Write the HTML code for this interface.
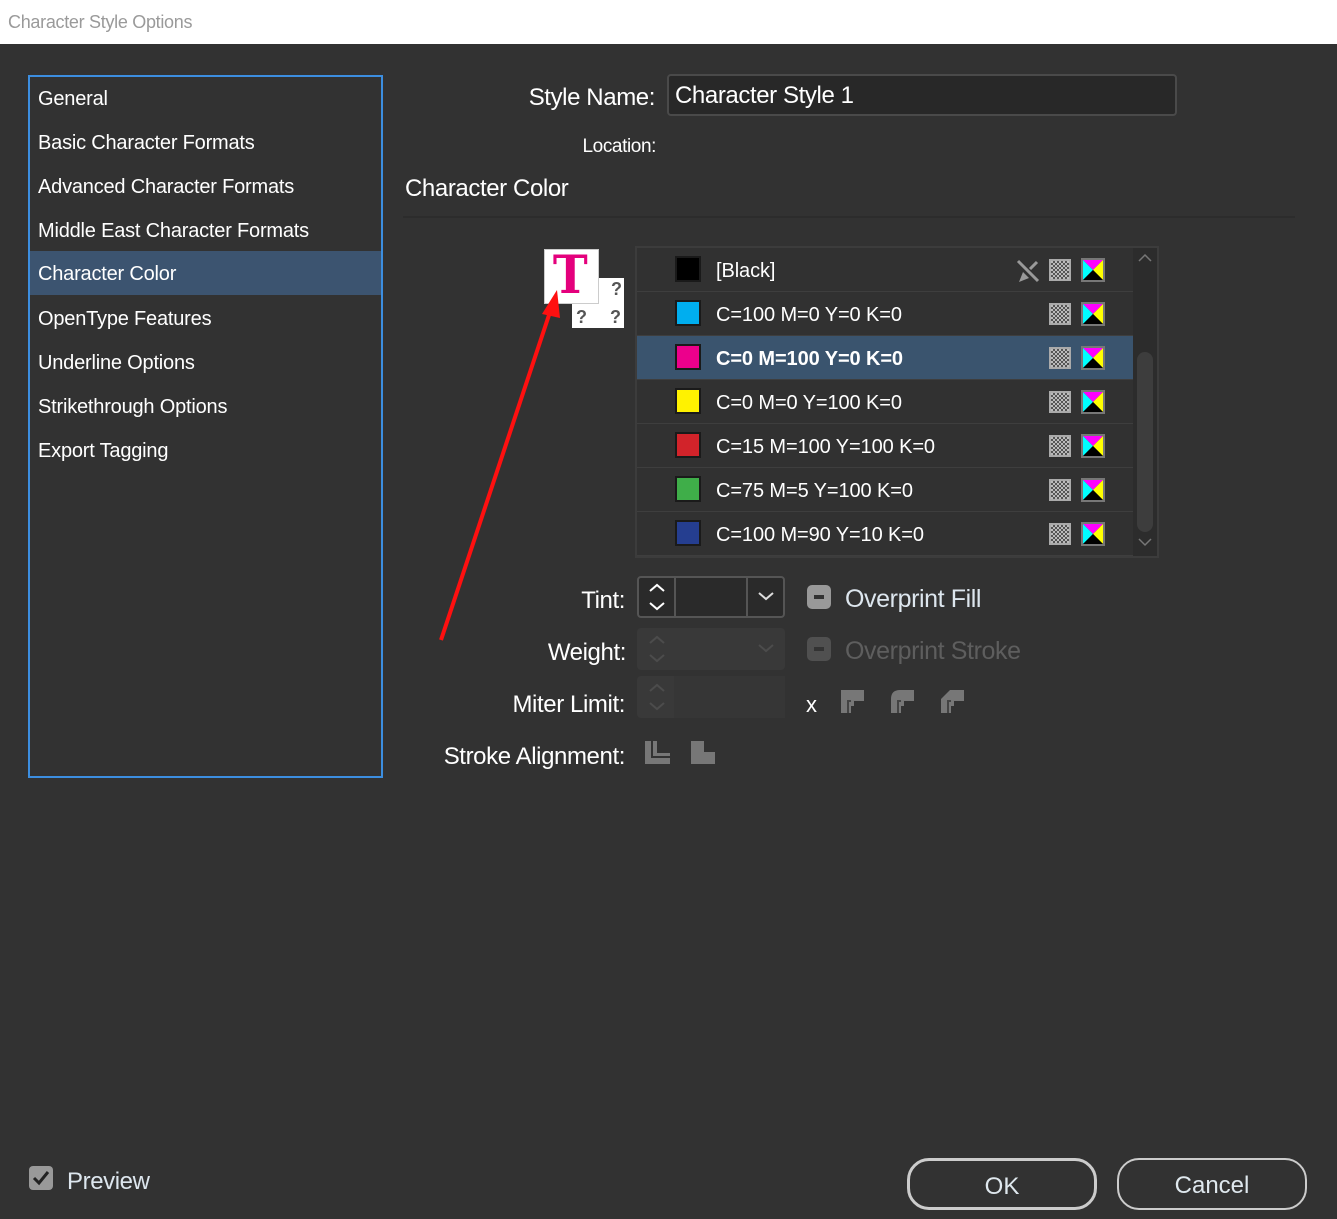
<!DOCTYPE html>
<html><head><meta charset="utf-8">
<style>
*{margin:0;padding:0;box-sizing:border-box}
body{width:1337px;height:1219px;background:#323232;font-family:"Liberation Sans",sans-serif;color:#fff;position:relative;overflow:hidden}
.a{position:absolute;white-space:nowrap}
.title{left:0;top:0;width:1337px;height:44px;background:#fff}
.nav{left:28px;top:75px;width:355px;height:703px;border:2px solid #3c8ee0}
.nav div{position:absolute;left:0;width:351px;height:44px;line-height:44px;padding-left:8px;font-size:20px;letter-spacing:-0.2px;color:#fff}
.row{position:absolute;left:0;width:496px;height:44px;border-bottom:1px solid #3e3e3e}
.sw{position:absolute;left:38px;top:8px;width:26px;height:26px;border:2px solid #1a1a1a}
.rl{position:absolute;left:79px;top:1px;line-height:44px;font-size:20px;letter-spacing:-0.1px;color:#fff}
.chk{position:absolute;left:412px;top:11px;width:22px;height:22px;background:repeating-conic-gradient(#555 0 25%,#bbb 0 50%) 0 0/4px 4px;border:2px solid #aaa}
.cmyk{position:absolute;left:444px;top:10px;width:24px;height:24px}
.lab{font-size:24px;letter-spacing:-0.4px;text-align:right}
.btn{border:2px solid #ccc;border-radius:22px;height:52px;font-size:24px;text-align:center;line-height:52px;color:#dfe8ee}
</style></head><body>
<div class="a title"><span class="a" style="left:8px;top:12px;font-size:18px;color:#9a9a9a;letter-spacing:-0.3px">Character Style Options</span></div>

<div class="a nav">
<div style="top:0">General</div>
<div style="top:44px">Basic Character Formats</div>
<div style="top:88px">Advanced Character Formats</div>
<div style="top:132px">Middle East Character Formats</div>
<div style="top:174px;background:#3c5470;line-height:46px">Character Color</div>
<div style="top:220px">OpenType Features</div>
<div style="top:264px">Underline Options</div>
<div style="top:308px">Strikethrough Options</div>
<div style="top:352px">Export Tagging</div>
</div>

<div class="a lab" style="right:682px;top:84px">Style Name:</div>
<div class="a" style="left:667px;top:74px;width:510px;height:42px;background:#282828;border:2px solid #4a4a4a;border-radius:4px"></div>
<div class="a" style="left:675px;top:82px;font-size:24px;letter-spacing:-0.4px">Character Style 1</div>
<div class="a" style="right:681px;top:136px;font-size:19px;letter-spacing:-0.4px">Location:</div>
<div class="a" style="left:405px;top:175px;font-size:24px;letter-spacing:-0.4px">Character Color</div>
<div class="a" style="left:403px;top:216px;width:892px;height:2px;background:#2c2c2c"></div>

<!-- T icon -->
<div class="a" style="left:572px;top:278px;width:52px;height:50px;background:#fff"></div>
<div class="a" style="left:576px;top:307px;font-size:18px;font-weight:bold;color:#555">?</div>
<div class="a" style="left:610px;top:307px;font-size:18px;font-weight:bold;color:#555">?</div>
<div class="a" style="left:611px;top:279px;font-size:18px;font-weight:bold;color:#555">?</div>
<div class="a" style="left:544px;top:249px;width:55px;height:55px;background:#fff;border:1px solid #ccc"></div>
<div class="a" style="left:551px;top:246px;font-family:'DejaVu Serif',serif;font-weight:bold;font-size:52px;color:#e4007c;line-height:60px;transform:scaleX(0.9)">T</div>

<!-- red arrow -->
<svg class="a" style="left:430px;top:280px" width="140" height="370"><line x1="11" y1="360" x2="122" y2="26" stroke="#ff1010" stroke-width="4"/><polygon points="127,10 112,34 130,38" fill="#ff1010"/></svg>

<!-- list -->
<div class="a" style="left:635px;top:246px;width:524px;height:312px;border:2px solid #3c3c3c;background:#313131;overflow:hidden">
<div class="row" style="top:0"><div class="sw" style="background:#000"></div><div class="rl">[Black]</div>
<svg style="position:absolute;left:378px;top:10px" width="26" height="26"><path d="M3 3L23 23M22 4L15 11" stroke="#999" stroke-width="3"/><path d="M8 14l-4 10 10-4z" fill="#999"/></svg>
<div class="chk"></div><svg class="cmyk"><path d="M1 1H23L12 12Z" fill="#f0f"/><path d="M1 1V23L12 12Z" fill="#0ff"/><path d="M23 1V23L12 12Z" fill="#ff0"/><path d="M1 23H23L12 12Z" fill="#000"/><rect x="1" y="1" width="22" height="22" fill="none" stroke="#777" stroke-width="2"/></svg></div>
<div class="row" style="top:44px"><div class="sw" style="background:#00aeef"></div><div class="rl">C=100 M=0 Y=0 K=0</div><div class="chk"></div><svg class="cmyk"><path d="M1 1H23L12 12Z" fill="#f0f"/><path d="M1 1V23L12 12Z" fill="#0ff"/><path d="M23 1V23L12 12Z" fill="#ff0"/><path d="M1 23H23L12 12Z" fill="#000"/><rect x="1" y="1" width="22" height="22" fill="none" stroke="#777" stroke-width="2"/></svg></div>
<div class="row" style="top:88px;background:#3a546e"><div class="sw" style="background:#ec008c"></div><div class="rl" style="font-weight:bold">C=0 M=100 Y=0 K=0</div><div class="chk"></div><svg class="cmyk"><path d="M1 1H23L12 12Z" fill="#f0f"/><path d="M1 1V23L12 12Z" fill="#0ff"/><path d="M23 1V23L12 12Z" fill="#ff0"/><path d="M1 23H23L12 12Z" fill="#000"/><rect x="1" y="1" width="22" height="22" fill="none" stroke="#777" stroke-width="2"/></svg></div>
<div class="row" style="top:132px"><div class="sw" style="background:#fff200"></div><div class="rl">C=0 M=0 Y=100 K=0</div><div class="chk"></div><svg class="cmyk"><path d="M1 1H23L12 12Z" fill="#f0f"/><path d="M1 1V23L12 12Z" fill="#0ff"/><path d="M23 1V23L12 12Z" fill="#ff0"/><path d="M1 23H23L12 12Z" fill="#000"/><rect x="1" y="1" width="22" height="22" fill="none" stroke="#777" stroke-width="2"/></svg></div>
<div class="row" style="top:176px"><div class="sw" style="background:#d2232a"></div><div class="rl">C=15 M=100 Y=100 K=0</div><div class="chk"></div><svg class="cmyk"><path d="M1 1H23L12 12Z" fill="#f0f"/><path d="M1 1V23L12 12Z" fill="#0ff"/><path d="M23 1V23L12 12Z" fill="#ff0"/><path d="M1 23H23L12 12Z" fill="#000"/><rect x="1" y="1" width="22" height="22" fill="none" stroke="#777" stroke-width="2"/></svg></div>
<div class="row" style="top:220px"><div class="sw" style="background:#3fae49"></div><div class="rl">C=75 M=5 Y=100 K=0</div><div class="chk"></div><svg class="cmyk"><path d="M1 1H23L12 12Z" fill="#f0f"/><path d="M1 1V23L12 12Z" fill="#0ff"/><path d="M23 1V23L12 12Z" fill="#ff0"/><path d="M1 23H23L12 12Z" fill="#000"/><rect x="1" y="1" width="22" height="22" fill="none" stroke="#777" stroke-width="2"/></svg></div>
<div class="row" style="top:264px"><div class="sw" style="background:#253e90"></div><div class="rl">C=100 M=90 Y=10 K=0</div><div class="chk"></div><svg class="cmyk"><path d="M1 1H23L12 12Z" fill="#f0f"/><path d="M1 1V23L12 12Z" fill="#0ff"/><path d="M23 1V23L12 12Z" fill="#ff0"/><path d="M1 23H23L12 12Z" fill="#000"/><rect x="1" y="1" width="22" height="22" fill="none" stroke="#777" stroke-width="2"/></svg></div>
<div style="position:absolute;left:496px;top:0;width:24px;height:310px;background:#2c2c2c"></div>
<div style="position:absolute;left:500px;top:104px;width:16px;height:180px;background:#3d3d3d;border-radius:8px"></div>
<svg style="position:absolute;left:500px;top:4px" width="16" height="12"><path d="M2 9L8 3L14 9" stroke="#777" fill="none" stroke-width="1.5"/></svg>
<svg style="position:absolute;left:500px;top:288px" width="16" height="12"><path d="M2 3L8 9L14 3" stroke="#777" fill="none" stroke-width="1.5"/></svg>
</div>

<!-- Tint -->
<div class="a lab" style="right:712px;top:587px">Tint:</div>
<div class="a" style="left:637px;top:576px;width:148px;height:42px;border:2px solid #555;border-radius:4px;background:#2a2a2a"></div>
<div class="a" style="left:674px;top:578px;width:2px;height:38px;background:#555"></div>
<div class="a" style="left:746px;top:578px;width:2px;height:38px;background:#555"></div>
<svg class="a" style="left:645px;top:580px" width="24" height="34"><path d="M5 11L12 5L19 11M5 23L12 29L19 23" stroke="#fff" fill="none" stroke-width="2"/></svg>
<svg class="a" style="left:756px;top:588px" width="20" height="16"><path d="M3 5L10 11L17 5" stroke="#ddd" fill="none" stroke-width="2"/></svg>
<div class="a" style="left:807px;top:585px;width:24px;height:24px;background:#999;border-radius:5px"><div style="position:absolute;left:7px;top:10px;width:10px;height:4px;background:#333"></div></div>
<div class="a" style="left:845px;top:585px;font-size:25px;letter-spacing:-0.4px;color:#dde6ee">Overprint Fill</div>

<!-- Weight -->
<div class="a lab" style="right:711px;top:639px">Weight:</div>
<div class="a" style="left:637px;top:628px;width:148px;height:42px;background:#393939;border-radius:4px"></div>
<svg class="a" style="left:645px;top:632px" width="24" height="34"><path d="M5 11L12 5L19 11M5 23L12 29L19 23" stroke="#4c4c4c" fill="none" stroke-width="2"/></svg>
<svg class="a" style="left:756px;top:640px" width="20" height="16"><path d="M3 5L10 11L17 5" stroke="#4c4c4c" fill="none" stroke-width="2"/></svg>
<div class="a" style="left:807px;top:637px;width:24px;height:24px;background:#505050;border-radius:5px"><div style="position:absolute;left:7px;top:10px;width:10px;height:4px;background:#333"></div></div>
<div class="a" style="left:845px;top:637px;font-size:25px;letter-spacing:-0.4px;color:#5e5e5e">Overprint Stroke</div>

<!-- Miter -->
<div class="a lab" style="right:712px;top:691px">Miter Limit:</div>
<div class="a" style="left:637px;top:676px;width:148px;height:42px;background:#393939;border-radius:4px"></div>
<div class="a" style="left:674px;top:676px;width:111px;height:42px;background:#363636"></div>
<svg class="a" style="left:645px;top:680px" width="24" height="34"><path d="M5 11L12 5L19 11M5 23L12 29L19 23" stroke="#4c4c4c" fill="none" stroke-width="2"/></svg>
<div class="a" style="left:806px;top:692px;font-size:22px">x</div>
<svg class="a" style="left:840px;top:689px" width="130" height="26">
<path d="M1 1H24V12H14V17H11V24H1Z" fill="#777"/><path d="M11 12H8V24" stroke="#444" stroke-width="2" fill="none"/>
<path d="M51 10Q51 1 60 1H74V12H64V17H61V24H51Z" fill="#777"/><path d="M61 12H58V24" stroke="#444" stroke-width="2" fill="none"/>
<path d="M101 10L110 1H124V12H114V17H111V24H101Z" fill="#777"/><path d="M111 12H108V24" stroke="#444" stroke-width="2" fill="none"/>
</svg>

<!-- Stroke alignment -->
<div class="a lab" style="right:712px;top:743px">Stroke Alignment:</div>
<svg class="a" style="left:644px;top:740px" width="80" height="26">
<path d="M1 1H7V18H26V24H1Z" fill="#777"/><path d="M9 1H13V13H26V16H9Z" fill="#777"/>
<path d="M47 1H58V14H71V24H47Z" fill="#777"/><path d="M58 1H60V12H71V14H58Z" fill="#777"/>
</svg>

<!-- bottom -->
<div class="a" style="left:29px;top:1166px;width:24px;height:24px;background:#999;border-radius:4px"><svg width="24" height="24"><path d="M5 12L10 17L19 6" stroke="#222" stroke-width="3" fill="none"/></svg></div>
<div class="a" style="left:67px;top:1168px;font-size:24px;letter-spacing:-0.4px;color:#dde6ee">Preview</div>
<div class="a btn" style="left:907px;top:1158px;width:190px;border-width:3px">OK</div>
<div class="a btn" style="left:1117px;top:1158px;width:190px">Cancel</div>
</body></html>
